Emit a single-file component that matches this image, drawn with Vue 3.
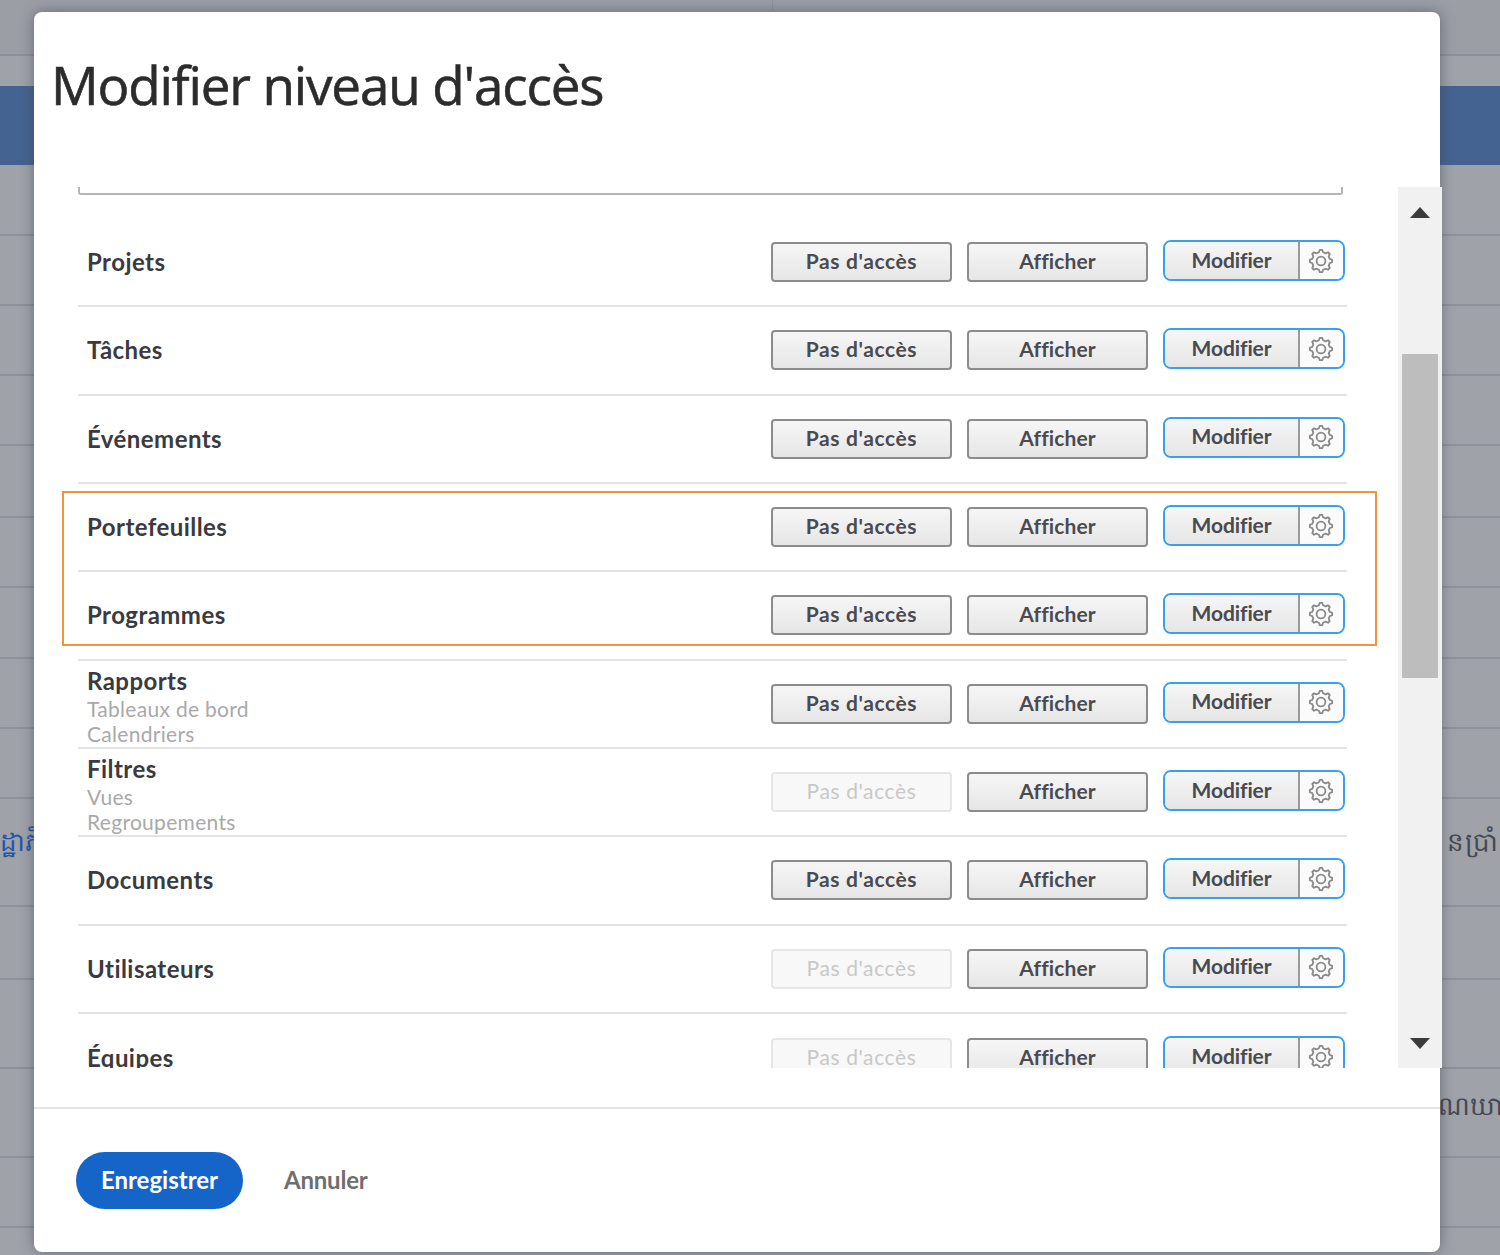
<template>
  <div class="page">
    <!-- page behind the dialog -->
    <div class="backdrop">
      <div class="top-cell"><span class="top-divider"></span></div>
      <div class="strip"></div>
      <div class="band"></div>
      <div v-for="r in bgRows" :key="r.end" class="bg-row" :class="r.cls" :style="{ height: r.h + 'px' }">
        <span v-if="r.left" class="bg-left">{{ r.left }}</span>
        <span v-if="r.right" class="bg-right">{{ r.right }}</span>
      </div>
    </div>

    <div class="modal">
      <h1 class="title">Modifier niveau d'accès</h1>

      <div class="body">
        <div class="scroll-content">
          <div class="top-box"></div>
          <div v-for="row in rows" :key="row.name" class="row">
            <div class="labels" :class="{ stacked: row.subs }">
              <div class="name">{{ row.name }}</div>
              <div v-for="s in row.subs" :key="s" class="sub">{{ s }}</div>
            </div>
            <div class="actions">
              <button class="btn" :class="{ disabled: row.noAccessOff }">Pas d'accès</button>
              <button class="btn view">Afficher</button>
              <div class="split">
                <button class="split-main">Modifier</button>
                <button class="split-gear" aria-label="Paramètres">
                  <svg width="26" height="26" viewBox="0 0 26 26">
                    <path :d="gearPath" fill="none" stroke="#8a8a8a" stroke-width="1.8" stroke-linejoin="round" />
                    <circle cx="13" cy="13" r="4.4" fill="none" stroke="#8a8a8a" stroke-width="1.8" />
                  </svg>
                </button>
              </div>
            </div>
          </div>
        </div>
        <div class="scrollbar">
          <span class="arrow up"></span>
          <span class="thumb"></span>
          <span class="arrow down"></span>
        </div>
      </div>

      <footer class="footer">
        <button class="save">Enregistrer</button>
        <button class="cancel">Annuler</button>
      </footer>
    </div>

    <!-- annotation on top of the screenshot -->
    <div class="highlight"></div>
  </div>
</template>

<script setup>
const rows = [
  { name: 'Projets' },
  { name: 'Tâches' },
  { name: 'Événements' },
  { name: 'Portefeuilles' },
  { name: 'Programmes' },
  { name: 'Rapports', subs: ['Tableaux de bord', 'Calendriers'] },
  { name: 'Filtres', subs: ['Vues', 'Regroupements'], noAccessOff: true },
  { name: 'Documents' },
  { name: 'Utilisateurs', noAccessOff: true },
  { name: 'Équipes', noAccessOff: true }
]

const bgRows = [
  { end: 236, h: 71 },
  { end: 306, h: 70 },
  { end: 376, h: 70 },
  { end: 446, h: 70 },
  { end: 518, h: 72 },
  { end: 588, h: 70 },
  { end: 659, h: 71 },
  { end: 729, h: 70 },
  { end: 799, h: 70 },
  { end: 907, h: 108, left: 'រដ្ឋាភិបាល', right: 'នប្រាំ', cls: 'tall' },
  { end: 980, h: 73 },
  { end: 1069, h: 89 },
  { end: 1158, h: 89, right: 'ណេឃា', cls: 'clipped' },
  { end: 1228, h: 70 }
]

// 8 tooth gear outline
function buildGear() {
  const pts = []
  const teeth = 8
  for (let i = 0; i < teeth; i++) {
    const a = (i / teeth) * Math.PI * 2 - Math.PI / 2
    const step = (Math.PI * 2) / teeth
    const list = [
      [a - step * 0.3, 9],
      [a - step * 0.14, 11.2],
      [a + step * 0.14, 11.2],
      [a + step * 0.3, 9]
    ]
    list.forEach(([ang, r]) => {
      pts.push((13 + Math.cos(ang) * r).toFixed(2) + ' ' + (13 + Math.sin(ang) * r).toFixed(2))
    })
  }
  return 'M' + pts.join('L') + 'Z'
}
const gearPath = buildGear()
</script>

<style>
html, body {
  margin: 0;
  padding: 0;
}
</style>

<style scoped>
.page {
  position: relative;
  width: 1500px;
  height: 1255px;
  overflow: hidden;
  background: #9fa2a9;
  font-family: Lato, "Liberation Sans", sans-serif;
  font-variant-ligatures: none;
}

.backdrop {
  display: flex;
  flex-direction: column;
}
.top-cell {
  height: 56px;
  background: #9b9ea5;
  border-bottom: 2px solid #8d9098;
  box-sizing: border-box;
  position: relative;
}
.top-divider {
  position: absolute;
  left: 772px;
  top: 0;
  width: 1px;
  height: 10px;
  background: #8d9098;
}
.strip {
  height: 30px;
}
.band {
  height: 79px;
  background: #456391;
}
.bg-row {
  box-sizing: border-box;
  border-bottom: 2px solid #8e9199;
  display: flex;
  align-items: center;
  justify-content: space-between;
  font-family: "Noto Sans", "DejaVu Sans", sans-serif;
  font-size: 26px;
  overflow: hidden;
}
.bg-row.tall {
  padding-bottom: 18px;
}
.bg-row.clipped {
  padding-bottom: 10px;
}
.bg-left {
  color: #2456a8;
  margin-left: -8px;
  white-space: nowrap;
}
.bg-right {
  color: #454853;
  margin-left: auto;
  margin-right: 1px;
  white-space: nowrap;
  letter-spacing: 1px;
}
.clipped .bg-right {
  margin-right: -3px;
  letter-spacing: 0;
}

.modal {
  position: absolute;
  left: 34px;
  top: 12px;
  width: 1406px;
  height: 1240px;
  background: #fff;
  border-radius: 8px;
  box-shadow: 0 0 14px rgba(60, 64, 75, 0.55);
  display: flex;
  flex-direction: column;
}
.title {
  margin: 0;
  height: 175px;
  box-sizing: border-box;
  padding: 40px 0 0 17px;
  font-size: 53px;
  line-height: 66px;
  font-weight: 500;
  color: #2c2c2c;
  font-family: "Open Sans", sans-serif;
  letter-spacing: -1.15px;
  -webkit-text-stroke: 0.6px #2c2c2c;
}

.body {
  height: 881px;
  display: flex;
  overflow: hidden;
  margin-right: -2px;
}
.scroll-content {
  width: 1364px;
  overflow: hidden;
}
.top-box {
  margin: 0 0 24px 44px;
  width: 1265px;
  height: 8px;
  border: 2px solid #b5b5b5;
  border-top: 0;
  box-sizing: border-box;
  border-radius: 0 0 3px 3px;
}
.row {
  margin-left: 44px;
  width: 1269px;
  height: 88.33px;
  box-sizing: border-box;
  border-bottom: 2px solid #e3e3e3;
  display: flex;
  align-items: center;
  justify-content: space-between;
}
.row:last-child {
  border-bottom: 0;
}
.labels {
  padding-left: 9px;
}
.labels.stacked {
  align-self: flex-start;
  padding-top: 5px;
}
.name {
  font-size: 24px;
  letter-spacing: 0.45px;
  font-weight: 700;
  color: #3a3a3f;
  line-height: 30px;
}
.sub {
  font-size: 21px;
  letter-spacing: 0.3px;
  color: #a9a9a9;
  line-height: 25px;
}
.actions {
  display: flex;
  align-items: center;
  gap: 15px;
  margin-right: 2px;
}
.btn {
  width: 181px;
  height: 40px;
  padding: 0 0 3px;
  box-sizing: border-box;
  border: 2px solid #8c8c8c;
  border-radius: 4px;
  background: linear-gradient(#f6f6f6, #e6e6e6);
  color: #4a4a4f;
  font-family: inherit;
  font-size: 21px;
  letter-spacing: 0.6px;
  font-weight: 700;
}
.btn.view {
  letter-spacing: 0.1px;
}
.btn.disabled {
  border-color: #e6e6e6;
  background: #f8f8f8;
  color: #c8c8c8;
  font-weight: 400;
}
.split {
  width: 182px;
  height: 41px;
  box-sizing: border-box;
  border: 2px solid #39a0f0;
  border-radius: 8px;
  display: flex;
  overflow: hidden;
  margin-top: -3px;
}
.split-main {
  width: 135px;
  padding: 0 0 3px;
  border: 0;
  border-right: 2px solid #9a9a9a;
  background: linear-gradient(#f6f6f6, #e6e6e6);
  color: #4a4a4f;
  font-family: inherit;
  font-size: 21px;
  letter-spacing: -0.1px;
  font-weight: 700;
}
.split-gear {
  flex: 1;
  padding: 0 2px 0 0;
  border: 0;
  background: #fbfbfb;
  display: flex;
  align-items: center;
  justify-content: center;
}

.scrollbar {
  width: 44px;
  background: #f1f1f1;
  position: relative;
}
.thumb {
  position: absolute;
  left: 4px;
  top: 167px;
  width: 36px;
  height: 324px;
  background: #bdbdbd;
}
.arrow {
  position: absolute;
  left: 12px;
  width: 0;
  height: 0;
  border-left: 10px solid transparent;
  border-right: 10px solid transparent;
}
.arrow.up {
  top: 20px;
  border-bottom: 11px solid #3c3c3c;
}
.arrow.down {
  bottom: 19px;
  border-top: 11px solid #3c3c3c;
}

.footer {
  flex: 1;
  margin-top: 39px;
  border-top: 2px solid #e5e5e5;
  display: flex;
  align-items: center;
  padding-left: 42px;
  gap: 41px;
}
.save {
  width: 167px;
  height: 57px;
  border: 0;
  border-radius: 29px;
  background: #1565c8;
  color: #fff;
  font-family: inherit;
  font-size: 24px;
  font-weight: 700;
  padding: 0 0 2px;
}
.cancel {
  padding: 0 0 2px;
  border: 0;
  background: none;
  color: #6f6f6f;
  font-family: inherit;
  font-size: 24px;
  letter-spacing: -0.2px;
  font-weight: 700;
}

.highlight {
  position: absolute;
  left: 62px;
  top: 491px;
  width: 1315px;
  height: 155px;
  box-sizing: border-box;
  border: 2px solid #f0963a;
}
</style>
